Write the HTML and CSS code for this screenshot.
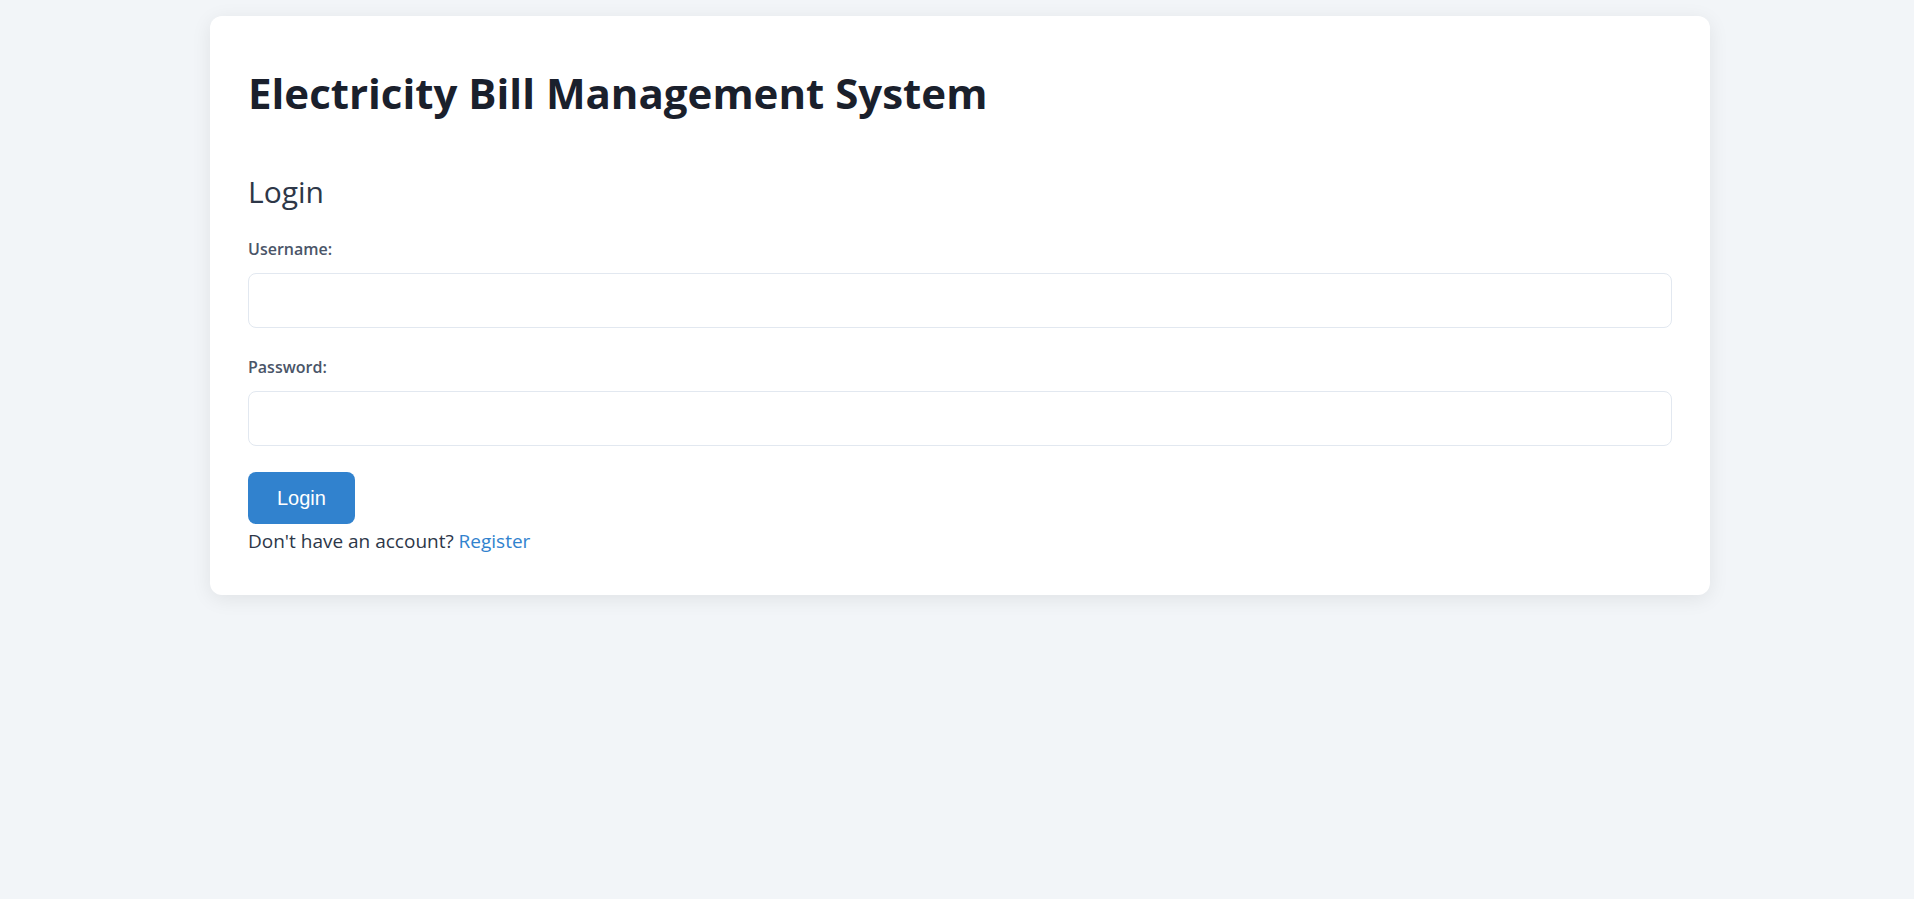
FILE: index.html
```html
<!DOCTYPE html>
<html lang="en">
<head>
<meta charset="utf-8">
<title>Electricity Bill Management System</title>
<link rel="stylesheet" href="styles.css">
</head>
<body>
<main class="card">
  <h1 class="title">Electricity Bill Management System</h1>
  <section class="login">
    <h2 class="login-title">Login</h2>
    <form class="form">
      <label class="label" for="username">Username:</label>
      <input class="input" id="username" type="text">
      <label class="label" for="password">Password:</label>
      <input class="input input-last" id="password" type="password">
      <button class="btn" type="button">Login</button>
    </form>
    <p class="register">Don't have an account? <a class="link" href="#">Register</a></p>
  </section>
</main>
</body>
</html>
```

FILE: styles.css
```css
* { box-sizing: border-box; }
html, body { margin: 0; padding: 0; }
body {
  background: #f2f5f8;
  font-family: "Open Sans", "Noto Sans", sans-serif;
  color: #2d3748;
  padding: 16px 0 0 6px;
  min-height: 899px;
}
.card {
  width: 1500px;
  margin: 0 auto;
  background: #ffffff;
  border-radius: 12px;
  box-shadow: 0 4px 20px rgba(0, 0, 0, 0.08);
  padding: 38px 38px 39px;
}
.title {
  margin: 11px 0 0;
  font-size: 42px;
  font-weight: 700;
  line-height: 56px;
  color: #1a202c;
}
.login { margin-top: 51px; }
.login-title {
  margin: 0;
  font-size: 30px;
  font-weight: 500;
  line-height: 40px;
  color: #2d3748;
}
.form {
  display: flex;
  flex-direction: column;
  align-items: flex-start;
  margin-top: 26px;
}
.label {
  font-size: 16px;
  font-weight: 600;
  line-height: 22px;
  color: #4a5568;
  margin-bottom: 13px;
}
.input {
  width: 100%;
  height: 55px;
  border: 1px solid #e2e8f0;
  border-radius: 8px;
  background: #fff;
  margin: 0 0 28px;
  font-size: 16px;
  padding: 0 12px;
}
.input-last { margin-bottom: 26px; }
.btn {
  font-family: "Liberation Sans", Arial, sans-serif;
  font-size: 20px;
  line-height: 24px;
  padding: 14px 29px;
  background: #3182ce;
  color: #ffffff;
  border: none;
  border-radius: 8px;
}
.register {
  margin: 2px 0 0;
  font-size: 19px;
  line-height: 30px;
  color: #2d3748;
}
.link { color: #3182ce; text-decoration: none; }
```
